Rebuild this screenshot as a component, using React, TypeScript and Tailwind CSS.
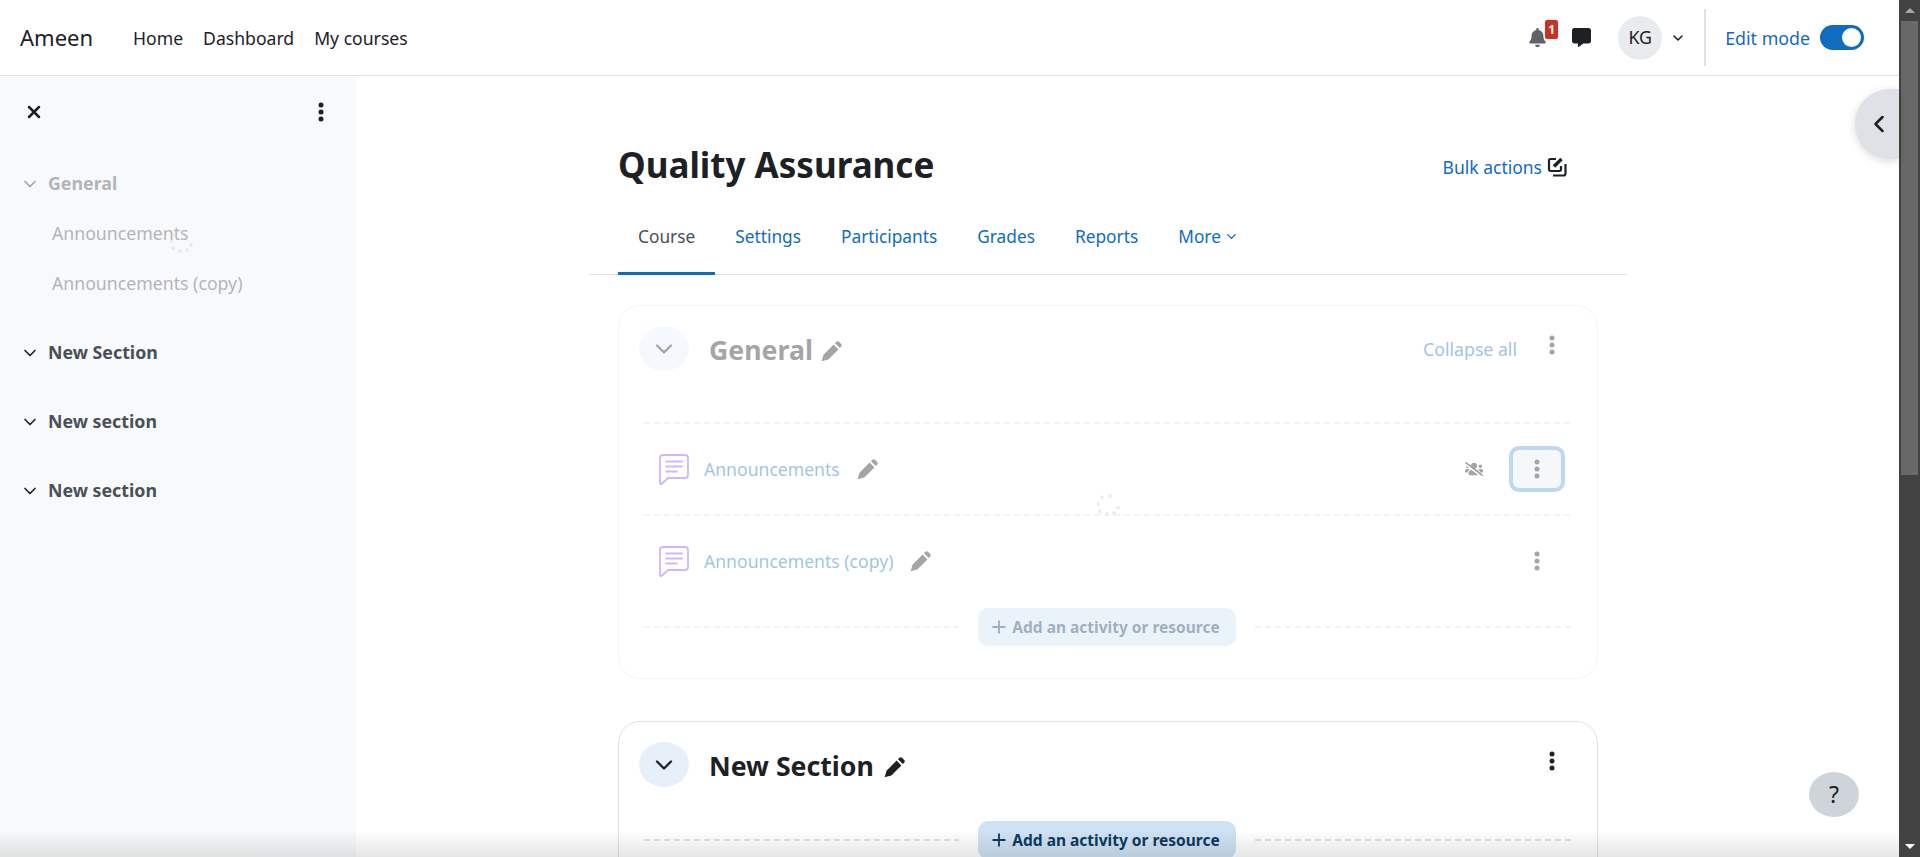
import { Plus, X, ChevronDown, ChevronLeft } from "lucide-react";
import { FaBell, FaCommentAlt, FaUsersSlash } from "react-icons/fa";

function Dots({ className = "" }: { className?: string }) {
  return (
    <svg width="6" height="20" viewBox="0 0 6 20" className={className} fill="currentColor">
      <circle cx="3" cy="3" r="2.5" />
      <circle cx="3" cy="10" r="2.5" />
      <circle cx="3" cy="17" r="2.5" />
    </svg>
  );
}

function Pencil({ className = "" }: { className?: string }) {
  return (
    <svg width="21" height="21" viewBox="0 0 20 20" className={className} fill="currentColor">
      <path d="M.6 19.4 2.4 13 12 3.4 16.6 8 7 17.6z" />
      <path d="M13.3 2.1 14.6.8a1.8 1.8 0 0 1 2.5 0l2.1 2.1a1.8 1.8 0 0 1 0 2.5l-1.3 1.3z" />
    </svg>
  );
}

function ForumIcon() {
  return (
    <svg width="30" height="31" viewBox="0 0 30 31" fill="none" stroke="#8a4dff" strokeWidth="1.8" strokeLinejoin="round" strokeLinecap="round">
      <path d="M4 1h22a3 3 0 0 1 3 3v17a3 3 0 0 1-3 3H9l-7 6.5-1-1V4a3 3 0 0 1 3-3z" />
      <path d="M7 7.5h16M7 12.5h16M7 17.5h11" />
    </svg>
  );
}

function BulkIcon() {
  return (
    <svg width="20" height="20" viewBox="0 0 20 20" fill="none" stroke="#1d2125" strokeWidth="2.2">
      <path d="M9 2H3.5A1.5 1.5 0 0 0 2 3.5v9A1.5 1.5 0 0 0 3.5 14h9a1.5 1.5 0 0 0 1.5-1.5V9" />
      <path d="M18.5 7v9.5a2 2 0 0 1-2 2H6" />
      <path d="M7 9.5 14.5 2" strokeWidth="3.4" />
    </svg>
  );
}

function DashLine({ className = "" }: { className?: string }) {
  return <div className={`h-[2px] bg-[repeating-linear-gradient(90deg,#dee2e6_0_6px,transparent_6px_10px)] ${className}`} />;
}

function Spinner({ className = "" }: { className?: string }) {
  return (
    <svg width="26" height="24" viewBox="0 0 26 24" fill="#d4d4d4" className={className}>
      <circle cx="13" cy="2" r="2" />
      <circle cx="5" cy="3.5" r="2" />
      <circle cx="1" cy="10" r="2" />
      <circle cx="3" cy="17" r="2" />
      <circle cx="10" cy="20" r="2" />
      <circle cx="17" cy="19" r="2" />
      <circle cx="21" cy="14" r="2" />
    </svg>
  );
}

function AddRow() {
  return (
    <div className="flex items-center justify-between">
      <DashLine className="w-[315px]" />
      <button className="flex h-[38px] w-[258px] items-center justify-center gap-[3px] rounded-[10px] bg-[#cfe2f3] pr-[5px] text-[15.5px] font-bold text-[#0c3a63]">
        <Plus size={20} strokeWidth={2.2} />
        <span className="mt-[2px]">Add an activity or resource</span>
      </button>
      <DashLine className="w-[319px]" />
    </div>
  );
}

function ActivityRow({ name, focused }: { name: string; focused?: boolean }) {
  return (
    <div className="flex h-[90px] items-center pl-[15px] pr-[9px]">
      <ForumIcon />
      <a className="ml-[15px] text-[17.6px] text-[#0f6cbf]">{name}</a>
      <Pencil className="ml-[17px] text-[#1d2125]" />
      <div className="ml-auto flex items-center">
        {focused && <FaUsersSlash size={18} className="mr-[26px] text-[#1d2125]" />}
        <div className={`flex h-[46px] w-[56px] items-center justify-center rounded-[10px] ${focused ? "border-[4px] border-[#5f9fd9] bg-[#e9ecef]" : ""}`}>
          <Dots className="text-[#1d2125]" />
        </div>
      </div>
    </div>
  );
}

function SectionHead({ title, collapseAll }: { title: string; collapseAll?: boolean }) {
  return (
    <div className="flex h-[45px] items-center pl-[20px] pr-[42px]">
      <div className="flex h-[45px] w-[50px] items-center justify-center rounded-[50%] bg-[#e7eff8] text-[#1d2125]">
        <ChevronDown size={28} strokeWidth={2} />
      </div>
      <h3 className="ml-[20px] mt-[3px] text-[26.7px] leading-none font-bold text-[#1d2125]">{title}</h3>
      <Pencil className={`mt-[5px] text-[#1d2125] ${collapseAll ? "ml-[8px]" : "ml-[10px]"}`} />
      {collapseAll && <a className="ml-auto mr-[32px] mt-[2px] text-[17.7px] text-[#0f6cbf]">Collapse all</a>}
      <Dots className={`mb-[7px] text-[#1d2125] ${collapseAll ? "" : "ml-auto"}`} />
    </div>
  );
}

function SideSection({ title }: { title: string }) {
  return (
    <div className="flex h-[69px] items-center pl-[20px] text-[17.8px] font-bold text-[#495057]">
      <ChevronDown size={20} strokeWidth={2} className="text-[#1d2125]" />
      <span className="ml-[8px]">{title}</span>
    </div>
  );
}

export default function App() {
  return (
    <div className="relative flex h-[857px] w-[1920px] overflow-hidden bg-white font-['Noto_Sans',sans-serif] text-[#1d2125]">
      <div className="flex w-[1899px] flex-col">
        <header className="flex h-[76px] shrink-0 items-center border-b border-[#dee2e6] pl-[20px] pr-[35px]">
          <span className="w-[113px] text-[22px]">Ameen</span>
          <nav className="mt-[1px] flex gap-[20px] text-[17.6px]">
            <a>Home</a>
            <a>Dashboard</a>
            <a>My courses</a>
          </nav>
          <div className="ml-auto flex items-center">
            <div className="relative mr-[25px]">
              <FaBell size={19} className="text-[#5f6368]" />
              <span className="absolute -top-[8px] left-[17px] flex h-[19px] w-[13px] items-center justify-center rounded-[2px] bg-[#ca3120] text-[12px] font-bold text-white">1</span>
            </div>
            <FaCommentAlt size={19} className="mr-[27px]" />
            <div className="flex h-[44px] w-[44px] items-center justify-center rounded-full bg-[#e9ecef] text-[17.8px]">KG</div>
            <ChevronDown size={16} strokeWidth={2.4} className="ml-[8px]" />
            <div className="ml-[18px] h-[57px] w-[2px] bg-[#dee2e6]" />
            <span className="ml-[19px] mt-[1px] text-[17.8px] text-[#0f6cbf]">Edit mode</span>
            <div className="ml-[10px] flex h-[25px] w-[44px] items-center justify-end rounded-full bg-[#0f6cbf] pr-[3px]">
              <div className="h-[19px] w-[19px] rounded-full bg-white" />
            </div>
          </div>
        </header>
        <div className="flex min-h-0 flex-1">
          <aside className="relative w-[356px] shrink-0 bg-[#f8f9fa]">
            <div className="flex h-[71px] items-center justify-between pl-[24px] pr-[32px]">
              <X size={20} strokeWidth={3} />
              <Dots />
            </div>
            <div className="opacity-40">
              <div className="flex h-[71px] items-center pl-[20px] pt-[2px] text-[17.8px] font-bold text-[#495057]">
                <ChevronDown size={20} strokeWidth={2} className="text-[#1d2125]" />
                <span className="ml-[8px]">General</span>
              </div>
              <div className="pl-[52px] text-[17.7px] text-[#495057]">
                <div className="flex h-[30px] items-center">Announcements</div>
                <div className="mt-[20px] flex h-[30px] items-center">Announcements (copy)</div>
              </div>
            </div>
            <div className="mt-[20px]">
              <SideSection title="New Section" />
              <SideSection title="New section" />
              <SideSection title="New section" />
            </div>
            <Spinner className="absolute left-[170px] top-[155px] opacity-40" />
          </aside>
          <main className="min-w-0 flex-1 pl-[233px]">
            <div className="w-[1038px]">
              <div className="flex h-[48px] mt-[65px] items-center justify-between pl-[29px] pr-[60px]">
                <h1 className="text-[35px] font-bold">Quality Assurance</h1>
                <a className="mt-[4px] flex items-center gap-[5px] text-[17.5px] text-[#0f6cbf]">
                  Bulk actions
                  <BulkIcon />
                </a>
              </div>
              <nav className="mt-[12px] flex h-[74px] border-b border-[#dee2e6] pb-[2px] pl-[29px] text-[17.3px] text-[#0f6cbf]">
                <a className="-mb-[3px] flex items-center border-b-[3px] border-[#0f6cbf] px-[20px] text-[#495057]">Course</a>
                <a className="flex items-center px-[20px]">Settings</a>
                <a className="flex items-center px-[20px]">Participants</a>
                <a className="flex items-center px-[20px]">Grades</a>
                <a className="flex items-center px-[20px]">Reports</a>
                <a className="flex items-center gap-[3px] px-[20px]">
                  More
                  <ChevronDown size={15} strokeWidth={2.2} />
                </a>
              </nav>
            </div>
            <div className="ml-[29px] mt-[30px] w-[980px]">
              <section className="relative h-[374px] rounded-[22px] border border-[#dee2e6] pt-[20px] opacity-40">
                <SectionHead title="General" collapseAll />
                <div className="ml-[25px] mr-[23px] mt-[51px]">
                  <DashLine />
                  <ActivityRow name="Announcements" focused />
                  <DashLine />
                  <ActivityRow name="Announcements (copy)" />
                  <div className="mt-[2px]">
                    <AddRow />
                  </div>
                </div>
                <Spinner className="absolute left-[478px] top-[188px]" />
              </section>
              <section className="mt-[42px] h-[300px] rounded-[22px] border border-[#dee2e6] pt-[20px]">
                <SectionHead title="New Section" />
                <div className="ml-[25px] mr-[23px] mt-[34px]">
                  <AddRow />
                </div>
              </section>
            </div>
          </main>
        </div>
      </div>

      <div className="flex w-[21px] shrink-0 flex-col items-center bg-[#424242]">
        <div className="flex h-[21px] items-center justify-center">
          <div className="h-0 w-0 border-x-[5px] border-b-[5px] border-x-transparent border-b-[#a8a8a8]" />
        </div>
        <div className="h-[454px] w-[17px] bg-[#686868]" />
        <div className="mt-auto flex h-[21px] items-center justify-center">
          <div className="h-0 w-0 border-x-[5px] border-t-[5px] border-x-transparent border-t-white" />
        </div>
      </div>

      <div className="absolute left-[1855px] top-[89px] flex h-[70px] w-[44px] items-center overflow-hidden rounded-l-[35px] bg-[#dee2e6] pl-[10px] shadow-[0_2px_8px_rgba(0,0,0,0.15)]">
        <ChevronLeft size={28} strokeWidth={2.2} />
      </div>
      <div className="absolute left-[1809px] top-[772px] flex h-[45px] w-[50px] items-center justify-center rounded-[50%] bg-[#ced4da] text-[23px]">?</div>
      <div className="pointer-events-none absolute bottom-0 left-0 h-[27px] w-[1899px] bg-gradient-to-b from-transparent to-black/10" />
    </div>
  );
}
